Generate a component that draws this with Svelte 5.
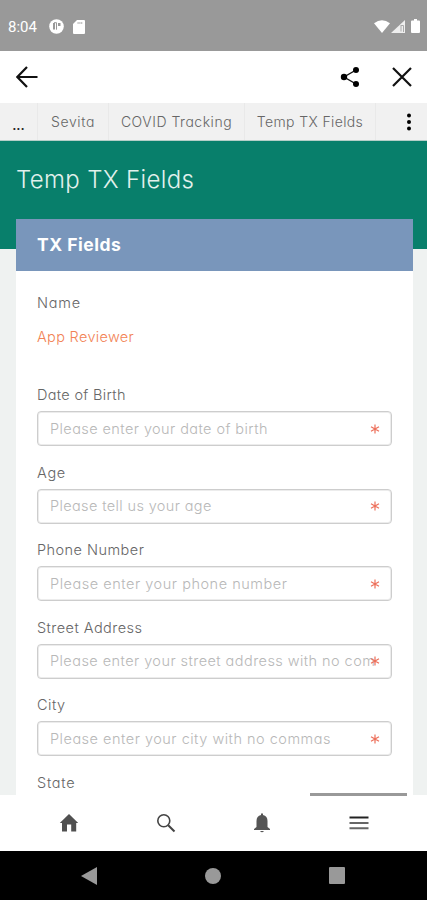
<script>
  const tabs = [
    { label: 'Sevita', width: 71, spacing: 0.6 },
    { label: 'COVID Tracking', width: 136, spacing: 0.52 },
    { label: 'Temp TX Fields', width: 131, spacing: 0.38 },
  ];

  // tracking for the label and its placeholder, in px
  const fields = [
    { label: 'Date of Birth', labelSpacing: 0.32, placeholder: 'Please enter your date of birth', spacing: 0.42 },
    { label: 'Age', labelSpacing: 0.7, placeholder: 'Please tell us your age', spacing: 0.37 },
    { label: 'Phone Number', labelSpacing: 0.46, placeholder: 'Please enter your phone number', spacing: 0.53 },
    { label: 'Street Address', labelSpacing: 0.44, placeholder: 'Please enter your street address with no commas', spacing: 0.44 },
    { label: 'City', labelSpacing: 0.5, placeholder: 'Please enter your city with no commas', spacing: 0.5 },
  ];
</script>

<div class="screen">
  <header class="status">
    <span class="time">8:04</span>
    <svg class="badge" width="15" height="15" viewBox="0 0 15 15">
      <circle cx="7.5" cy="7.5" r="7.3" fill="#fff" />
      <path d="M5 4v6.500" stroke="#999" stroke-width="2" />
      <path d="M5 3.700h2.500v7" fill="none" stroke="#999" stroke-width="1" />
      <path d="M9 4h2.500v3H9z" fill="#999" />
    </svg>
    <svg class="card-icon" width="12" height="14" viewBox="0 0 12 14">
      <path d="M4 0h7q1 0 1 1v12q0 1-1 1H1q-1 0-1-1V4z" fill="#fff" />
      <path d="M4.500 3h5" stroke="#aaa" stroke-width="1.500" stroke-dasharray="1.200 .6" />
    </svg>
    <span class="grow"></span>
    <svg width="47" height="16" viewBox="0 0 47 16">
      <path d="M0 4.200Q8 -1.800 16 4.200L8 14z" fill="#fff" />
      <path d="M17 14L31 1v13z" fill="#eee" />
      <path d="M27 6.500h2.800M27 6v6.500M29.500 7v6" stroke="#aaa" stroke-width="1" />
      <path d="M40 0h3v1.500h2q1 0 1 1V13q0 1-1 1h-7q-1 0-1-1V2.500q0-1 1-1h2z" fill="#fff" />
    </svg>
  </header>

  <div class="appbar">
    <svg width="22" height="22" viewBox="0 0 22 22" fill="none" stroke="#111" stroke-width="2.200">
      <path d="M21.500 11H1.500M11 1L1.300 11 11 21" />
    </svg>
    <span class="grow"></span>
    <svg class="share" width="20" height="22" viewBox="0 0 20 22">
      <path d="M16 4L4 11l12 7" fill="none" stroke="#111" stroke-width="1.400" />
      <circle cx="16" cy="4" r="3" />
      <circle cx="4" cy="11" r="3.200" />
      <circle cx="16" cy="18" r="3" />
    </svg>
    <svg width="20" height="20" viewBox="0 0 20 20" stroke="#111" stroke-width="2.200">
      <path d="M1 1l18 18M19 1L1 19" />
    </svg>
  </div>

  <nav class="tabs">
    <div class="more">...</div>
    {#each tabs as tab}
      <div class="tab" style="width: {tab.width}px; letter-spacing: {tab.spacing}px">{tab.label}</div>
    {/each}
    <svg class="kebab" width="6" height="18" viewBox="0 0 6 18">
      <circle cx="3" cy="2.500" r="2" />
      <circle cx="3" cy="9" r="2" />
      <circle cx="3" cy="15.500" r="2" />
    </svg>
  </nav>

  <main>
    <h1>Temp TX Fields</h1>
    <section class="card">
      <h2>TX Fields</h2>
      <div class="body">
        <div class="label wide">Name</div>
        <div class="value">App Reviewer</div>
        {#each fields as field}
          <div class="field">
            <div class="label" style="letter-spacing: {field.labelSpacing}px">{field.label}</div>
            <div class="input">
              <span class="placeholder" style="letter-spacing: {field.spacing}px">{field.placeholder}</span>
              <svg class="star" width="10" height="10" viewBox="0 0 10 10">
                <path d="M5 .5v9M1 2.700l8 4.600M9 2.700L1 7.300" stroke="#ed705b" stroke-width="1.200" />
              </svg>
            </div>
          </div>
        {/each}
        <div class="label wide">State</div>
      </div>
    </section>
  </main>

  <nav class="bottom">
    <span class="indicator"></span>
    <div class="item">
      <svg width="20" height="20" viewBox="0 0 20 20">
        <path d="M10 1L19.200 10h-2V18.500h-5V11.500H8v7H3V10H.8z" fill="#505050" />
      </svg>
    </div>
    <div class="item">
      <svg width="20" height="20" viewBox="0 0 20 20" fill="none" stroke="#444">
        <circle cx="7.800" cy="7.800" r="6" stroke-width="1.600" />
        <path d="M12.200 12.200l6.300 6.300" stroke-width="2" />
      </svg>
    </div>
    <div class="item">
      <svg width="18" height="20" viewBox="0 0 18 20" fill="#555">
        <path d="M8 2V.8q1-1 2 0V2q4.500 1 4.500 6v6l2.500 2v1H1v-1l2.500-2V8Q3.500 3 8 2zM7 18h4q-2 2.500-4 0z" />
      </svg>
    </div>
    <div class="item">
      <svg width="20" height="14" viewBox="0 0 20 14">
        <path d="M.5 1.500h19" stroke="#222" stroke-width="2" />
        <path d="M.5 7h19M.5 12.200h19" stroke="#666" stroke-width="2" />
      </svg>
    </div>
  </nav>

  <footer class="system">
    <svg width="16" height="18" viewBox="0 0 16 18" fill="#999"><path d="M16 0v18L0 9z" /></svg>
    <svg width="16" height="16" viewBox="0 0 16 16" fill="#999"><circle cx="8" cy="8" r="8" /></svg>
    <svg width="16" height="17" viewBox="0 0 16 17" fill="#999"><rect width="16" height="17" rx="1" /></svg>
  </footer>
</div>

<style>
  :global(body) {
    margin: 0;
  }
  .screen {
    width: 427px;
    height: 900px;
    display: flex;
    flex-direction: column;
    overflow: hidden;
    background: #fff;
    color: #666;
    font-family: Inter, "Noto Sans", sans-serif;
    font-feature-settings: "cv11";
    font-weight: 300;
    font-size: 14px;
  }
  svg {
    display: block;
    flex: none;
  }
  .grow {
    flex: 1;
  }
  .status {
    height: 51px;
    flex: none;
    box-sizing: border-box;
    padding: 2px 6px 0 8px;
    display: flex;
    align-items: center;
    background: #999;
  }
  .time {
    width: 41px;
    color: #fff;
    font-family: Roboto, sans-serif;
    font-size: 15px;
    font-weight: 400;
  }
  .card-icon {
    margin-left: 9px;
  }
  .appbar {
    height: 52px;
    flex: none;
    box-sizing: border-box;
    padding: 0 15px 0 16px;
    display: flex;
    align-items: center;
  }
  .share {
    margin-right: 32px;
  }
  .tabs {
    height: 38px;
    flex: none;
    box-sizing: border-box;
    display: flex;
    align-items: center;
    background: #f1f1f1;
    border-bottom: 1px solid #b5cec8;
  }
  .more,
  .tab {
    height: 100%;
    box-sizing: border-box;
    border-right: 1px solid #e9e9e9;
    text-align: center;
    line-height: 37px;
    white-space: nowrap;
  }
  .more {
    width: 38px;
    line-height: 44px;
    color: #222;
    font-weight: 500;
  }
  .kebab {
    margin-left: 30px;
  }
  main {
    height: 654px;
    flex: none;
    overflow: hidden;
    box-sizing: border-box;
    padding: 0 14px 0 16px;
    background: linear-gradient(#087f6b 108.5px, #eff2f1 108.5px);
  }
  h1 {
    margin: 0;
    height: 78px;
    line-height: 78px;
    color: #e2f1ed;
    font-size: 24px;
    font-weight: 300;
    letter-spacing: 0.35px;
  }
  .card {
    height: 576px;
    background: #fff;
  }
  h2 {
    margin: 0;
    height: 52px;
    padding-left: 21px;
    line-height: 52px;
    background: #7996bb;
    color: #fff;
    font-size: 17.5px;
    font-weight: 700;
    letter-spacing: 0.5px;
  }
  .body {
    padding: 21px 21px 0;
    font-size: 14.5px;
  }
  .label {
    height: 22px;
    line-height: 22px;
  }
  .wide {
    letter-spacing: 0.75px;
  }
  .value {
    height: 58px;
    padding-top: 12px;
    box-sizing: border-box;
    line-height: 22px;
    color: #f28355;
    margin-bottom: 12px;
    letter-spacing: 0.33px;
  }
  .field {
    height: 77.6px;
  }
  .input {
    height: 35px;
    margin-top: 5px;
    box-sizing: border-box;
    border: 1px solid #cdcdcd;
    box-shadow: inset 0 0 0 1px #ececec;
    border-radius: 4px;
    padding: 0 11px 0 12px;
    display: flex;
    align-items: center;
    color: #b8b8b8;
  }
  .placeholder {
    flex: 1;
    min-width: 0;
    margin-right: -5px;
    overflow: hidden;
    white-space: nowrap;
    line-height: 32px;
  }
  .bottom {
    height: 56px;
    flex: none;
    position: relative;
    padding: 0 20px 0 21px;
    display: flex;
    align-items: center;
    background: #fff;
  }
  .indicator {
    position: absolute;
    left: 310px;
    top: -2px;
    width: 97px;
    height: 3px;
    background: #999;
  }
  .item {
    flex: 1;
    display: flex;
    justify-content: center;
  }
  .system {
    height: 49px;
    flex: none;
    box-sizing: border-box;
    padding: 0 82px 0 81px;
    display: flex;
    align-items: center;
    justify-content: space-between;
    background: #000;
  }
</style>
